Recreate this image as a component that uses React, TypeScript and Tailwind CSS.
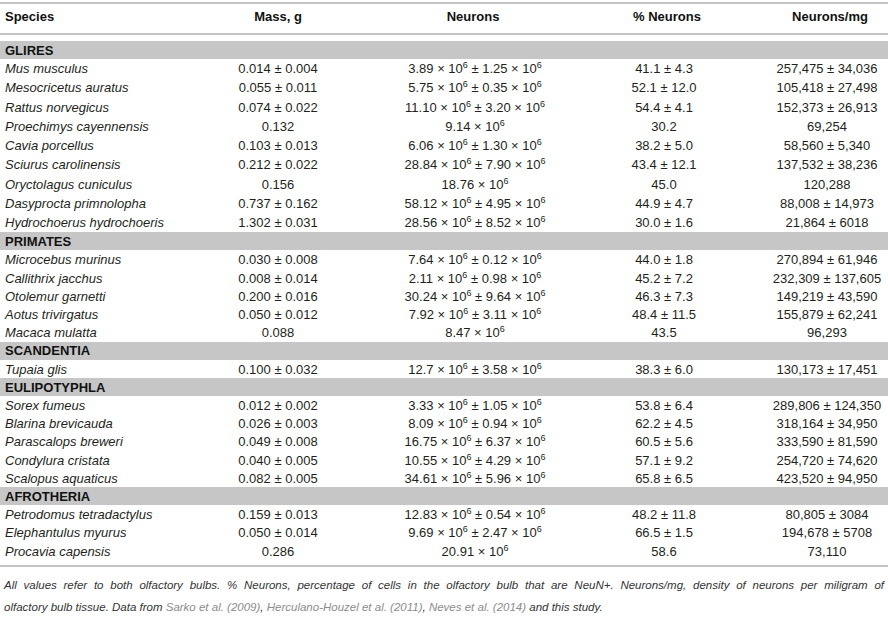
const font = { fontFamily: '"Liberation Sans", Arial, sans-serif' };

// neurons column: mean and sd, each printed as "x × 10^6"
const groups: { name: string; rows: [string, string, string, string | null, string, string][] }[] = [
  {
    name: 'GLIRES',
    rows: [
      ['Mus musculus', '0.014 ± 0.004', '3.89', '1.25', '41.1 ± 4.3', '257,475 ± 34,036'],
      ['Mesocricetus auratus', '0.055 ± 0.011', '5.75', '0.35', '52.1 ± 12.0', '105,418 ± 27,498'],
      ['Rattus norvegicus', '0.074 ± 0.022', '11.10', '3.20', '54.4 ± 4.1', '152,373 ± 26,913'],
      ['Proechimys cayennensis', '0.132', '9.14', null, '30.2', '69,254'],
      ['Cavia porcellus', '0.103 ± 0.013', '6.06', '1.30', '38.2 ± 5.0', '58,560 ± 5,340'],
      ['Sciurus carolinensis', '0.212 ± 0.022', '28.84', '7.90', '43.4 ± 12.1', '137,532 ± 38,236'],
      ['Oryctolagus cuniculus', '0.156', '18.76', null, '45.0', '120,288'],
      ['Dasyprocta primnolopha', '0.737 ± 0.162', '58.12', '4.95', '44.9 ± 4.7', '88,008 ± 14,973'],
      ['Hydrochoerus hydrochoeris', '1.302 ± 0.031', '28.56', '8.52', '30.0 ± 1.6', '21,864 ± 6018'],
    ],
  },
  {
    name: 'PRIMATES',
    rows: [
      ['Microcebus murinus', '0.030 ± 0.008', '7.64', '0.12', '44.0 ± 1.8', '270,894 ± 61,946'],
      ['Callithrix jacchus', '0.008 ± 0.014', '2.11', '0.98', '45.2 ± 7.2', '232,309 ± 137,605'],
      ['Otolemur garnetti', '0.200 ± 0.016', '30.24', '9.64', '46.3 ± 7.3', '149,219 ± 43,590'],
      ['Aotus trivirgatus', '0.050 ± 0.012', '7.92', '3.11', '48.4 ± 11.5', '155,879 ± 62,241'],
      ['Macaca mulatta', '0.088', '8.47', null, '43.5', '96,293'],
    ],
  },
  {
    name: 'SCANDENTIA',
    rows: [['Tupaia glis', '0.100 ± 0.032', '12.7', '3.58', '38.3 ± 6.0', '130,173 ± 17,451']],
  },
  {
    name: 'EULIPOTYPHLA',
    rows: [
      ['Sorex fumeus', '0.012 ± 0.002', '3.33', '1.05', '53.8 ± 6.4', '289,806 ± 124,350'],
      ['Blarina brevicauda', '0.026 ± 0.003', '8.09', '0.94', '62.2 ± 4.5', '318,164 ± 34,950'],
      ['Parascalops breweri', '0.049 ± 0.008', '16.75', '6.37', '60.5 ± 5.6', '333,590 ± 81,590'],
      ['Condylura cristata', '0.040 ± 0.005', '10.55', '4.29', '57.1 ± 9.2', '254,720 ± 74,620'],
      ['Scalopus aquaticus', '0.082 ± 0.005', '34.61', '5.96', '65.8 ± 6.5', '423,520 ± 94,950'],
    ],
  },
  {
    name: 'AFROTHERIA',
    rows: [
      ['Petrodomus tetradactylus', '0.159 ± 0.013', '12.83', '0.54', '48.2 ± 11.8', '80,805 ± 3084'],
      ['Elephantulus myurus', '0.050 ± 0.014', '9.69', '2.47', '66.5 ± 1.5', '194,678 ± 5708'],
      ['Procavia capensis', '0.286', '20.91', null, '58.6', '73,110'],
    ],
  },
];

const cols = 'grid grid-cols-[200px_156px_234px_154px_144px]';

const Pow = ({ v }: { v: string }) => (
  <>
    {v} × 10<sup className="text-[9px] -top-[5px]">6</sup>
  </>
);

export default function App() {
  return (
    <div className="w-[888px] h-[629px] bg-white text-[#231f20] pt-[2px]" style={font}>
      <div className="border-t-2 border-b-2 border-[#c4c4c4]">
        <div className={`${cols} h-[29px] pb-[3px] items-center text-[13px] font-bold text-[#111]`}>
          <div className="pl-[5px]">Species</div>
          <div className="text-center">Mass, g</div>
          <div className="text-center">Neurons</div>
          <div className="text-center">% Neurons</div>
          <div className="text-center pl-[28px]">Neurons/mg</div>
        </div>
      </div>
      <div className="pt-[6px] border-b-2 border-[#c4c4c4] pb-[5px]">
        {groups.map((g, gi) => (
          <div key={g.name}>
            <div className="h-[18px] pt-[1px] bg-[#c6c6c6] flex items-center pl-[5px] text-[13px] font-bold text-[#111]">
              {g.name}
            </div>
            {g.rows.map((r) => (
              <div
                key={r[0]}
                className={`${cols} ${gi === 0 ? 'h-[19.25px]' : 'h-[18.25px]'} items-center text-[13px]`}
              >
                <div className="pl-[5px] italic whitespace-nowrap">{r[0]}</div>
                <div className="text-center whitespace-nowrap">{r[1]}</div>
                <div className="text-center whitespace-nowrap pl-[4px]">
                  <Pow v={r[2]} />
                  {r[3] && (
                    <>
                      {' '}± <Pow v={r[3]} />
                    </>
                  )}
                </div>
                <div className="text-center whitespace-nowrap pr-[6px]">{r[4]}</div>
                <div className="text-center whitespace-nowrap pl-[22px]">{r[5]}</div>
              </div>
            ))}
          </div>
        ))}
      </div>
      <div className="pt-[7px] px-[4px] text-[11.5px] italic leading-[22px] text-[#333]">
        <div className="text-justify [text-align-last:justify] whitespace-nowrap">
          All values refer to both olfactory bulbs. % Neurons, percentage of cells in the olfactory bulb that are NeuN+. Neurons/mg, density of neurons per miligram of
        </div>
        <div>
          olfactory bulb tissue. Data from <span className="text-[#8c8c8c]">Sarko et al. (2009)</span>,{' '}
          <span className="text-[#8c8c8c]">Herculano-Houzel et al. (2011)</span>,{' '}
          <span className="text-[#8c8c8c]">Neves et al. (2014)</span> and this study.
        </div>
      </div>
    </div>
  );
}
